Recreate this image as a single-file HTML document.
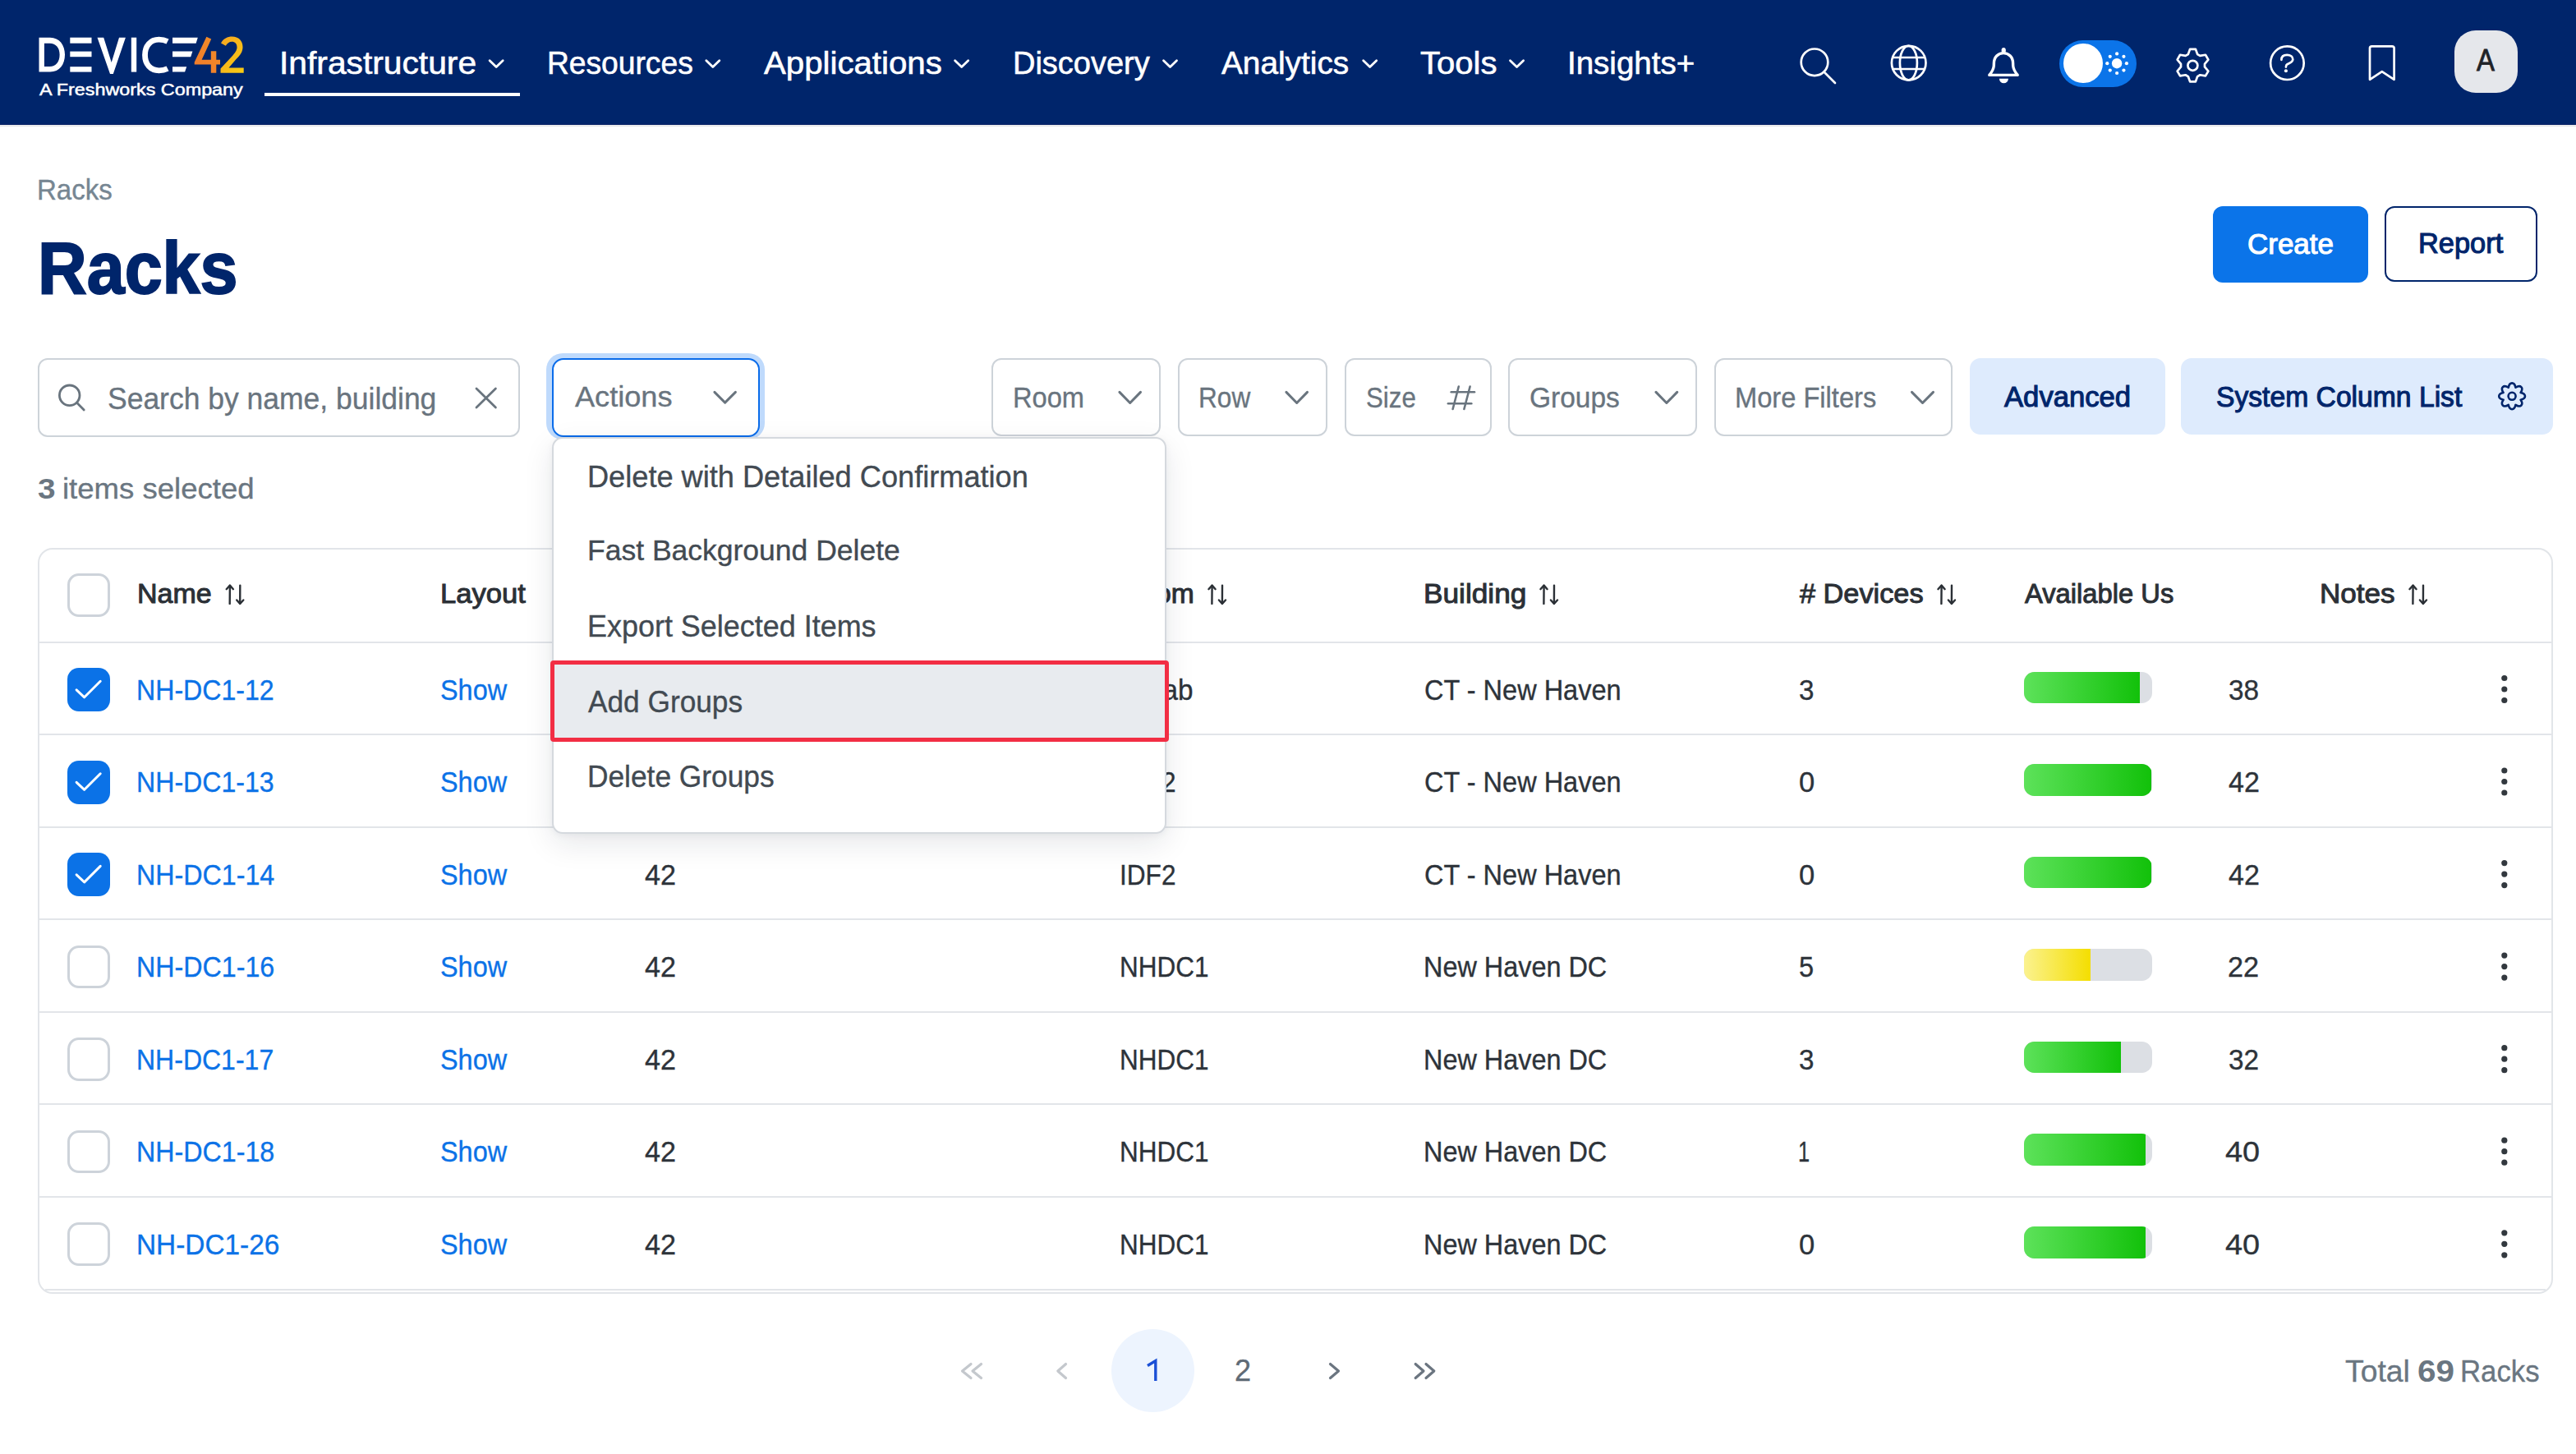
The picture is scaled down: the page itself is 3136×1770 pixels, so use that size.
<!DOCTYPE html><html><head><meta charset="utf-8"><title>Racks</title><style>
html,body{margin:0;padding:0;width:3136px;height:1770px;overflow:hidden;background:#fff;font-family:"Liberation Sans",sans-serif}
.t{position:absolute;white-space:nowrap;transform-origin:0 0}
.b{position:absolute;box-sizing:border-box}
svg{position:absolute;overflow:visible}
</style></head><body>
<div class="b" style="left:0;top:0;width:3136px;height:152px;background:#00256B"></div>
<div class="b" style="left:0;top:151px;width:3136px;height:1px;background:#001B62"></div>
<div class="b" style="left:0;top:152px;width:3136px;height:1px;background:#ECEDEF"></div>
<div class="b" style="left:0;top:153px;width:3136px;height:1px;background:#E0E3E6"></div>
<svg style="left:0;top:0" width="320" height="140" viewBox="0 0 320 140">
<defs><linearGradient id="g4" x1="0" y1="1" x2="1" y2="0"><stop offset="0" stop-color="#EE7A2C"/><stop offset="1" stop-color="#F28E27"/></linearGradient>
<linearGradient id="g2" x1="0" y1="0" x2="1" y2="1"><stop offset="0" stop-color="#F6A623"/><stop offset="1" stop-color="#F9CC12"/></linearGradient></defs>
<path fill="#fff" fill-rule="evenodd" d="M47.5 45.7H61C72.5 45.7 79 55 79 66.6C79 78.5 72.5 87.6 61 87.6H47.5Z M53.9 52.7V81H60.5C68 81 72.6 75.5 72.6 66.6C72.6 58 68 52.7 60.5 52.7Z"/>
<rect fill="#fff" x="85.3" y="45.7" width="26.2" height="7"/><rect fill="#fff" x="85.3" y="62.6" width="26.2" height="6.6"/><rect fill="#fff" x="85.3" y="81.2" width="26.2" height="6.4"/>
<path fill="#fff" d="M118.5 45.7H126.2L135.7 76L145 45.7H152.9L137.8 90H134Z"/>
<rect fill="#fff" x="159.8" y="45.7" width="6.4" height="41.9"/>
<path fill="none" stroke="#fff" stroke-width="6.8" d="M204 50.5C201 49 198 48.2 193.5 48.2C183 48.2 176.5 56 176.5 67C176.5 78 183 85.8 193.5 85.8C198 85.8 201 85 204 83.5"/>
<path fill="#fff" d="M210 45.7H240.8L238.6 52.7H210Z M210 62.6H234.4L232.2 69.2H210Z M210 81.2H227.2L225.1 87.6H210Z"/>
<path fill="url(#g4)" d="M251.4 44.8L257.2 47.6L245.6 72.8H256.8V62.2H263.3V72.8H268V78.5H263.3V88.8H256.8V78.5H236.7V75.8Z"/>
<path fill="url(#g2)" d="M269 52.5C272 47 277 44.6 282.5 44.6C290.5 44.6 295.5 50 295.5 57.2C295.5 63 292.5 67 287.5 72L278.5 82.5H296.7V88.8H268.5V83.5L282 69C286 64.5 288.5 61.5 288.5 57.5C288.5 53.2 286 50.8 282.3 50.8C279 50.8 276.5 52.8 274.8 55.8Z"/>
</svg>
<div class="b" style="left:322px;top:113px;width:311px;height:4px;background:#fff"></div>
<svg style="left:0;top:0" width="1" height="1"><polyline points="596.0999999999999,73.8 604.15,81.5 612.2,73.8" fill="none" stroke="#fff" stroke-width="2.8" stroke-linecap="round" stroke-linejoin="round"/></svg>
<svg style="left:0;top:0" width="1" height="1"><polyline points="859.8,73.8 867.8,81.5 875.8000000000001,73.8" fill="none" stroke="#fff" stroke-width="2.8" stroke-linecap="round" stroke-linejoin="round"/></svg>
<svg style="left:0;top:0" width="1" height="1"><polyline points="1162.6,73.8 1170.65,81.5 1178.7,73.8" fill="none" stroke="#fff" stroke-width="2.8" stroke-linecap="round" stroke-linejoin="round"/></svg>
<svg style="left:0;top:0" width="1" height="1"><polyline points="1416.5,73.8 1424.5,81.5 1432.5,73.8" fill="none" stroke="#fff" stroke-width="2.8" stroke-linecap="round" stroke-linejoin="round"/></svg>
<svg style="left:0;top:0" width="1" height="1"><polyline points="1659.7,73.8 1667.7,81.5 1675.7,73.8" fill="none" stroke="#fff" stroke-width="2.8" stroke-linecap="round" stroke-linejoin="round"/></svg>
<svg style="left:0;top:0" width="1" height="1"><polyline points="1838.5,73.8 1846.5500000000002,81.5 1854.6000000000001,73.8" fill="none" stroke="#fff" stroke-width="2.8" stroke-linecap="round" stroke-linejoin="round"/></svg>
<svg style="left:0;top:0" width="1" height="1">
<circle cx="2209" cy="75.8" r="16.3" fill="none" stroke="#fff" stroke-width="2.7"/>
<line x1="2221" y1="88" x2="2234" y2="101" stroke="#fff" stroke-width="2.7" stroke-linecap="round"/>
<circle cx="2323.7" cy="76.6" r="20.8" fill="none" stroke="#fff" stroke-width="2.7"/>
<ellipse cx="2323.4" cy="76.6" rx="10.5" ry="20.8" fill="none" stroke="#fff" stroke-width="2.7"/>
<line x1="2304" y1="70" x2="2343.5" y2="70" stroke="#fff" stroke-width="2.7"/>
<line x1="2304" y1="84" x2="2343.5" y2="84" stroke="#fff" stroke-width="2.7"/>
<path d="M2439 64.6C2445.5 64.6 2450.6 69.5 2450.6 77L2450.7 80C2451 84.5 2453 87.5 2456.2 91.4H2421.8C2425 87.5 2427 84.5 2427.3 80L2427.4 77C2427.4 69.5 2432.5 64.6 2439 64.6Z" fill="none" stroke="#fff" stroke-width="3.4" stroke-linejoin="round"/>
<circle cx="2439.2" cy="60.6" r="2.5" fill="#fff"/><rect x="2436.7" y="60.6" width="5" height="3" fill="#fff"/>
<path d="M2433.9 95.8H2444.9A5.5 5.5 0 0 1 2433.9 95.8Z" fill="#fff"/>
</svg>
<div class="b" style="left:2507px;top:48.6px;width:93.6px;height:57.7px;border-radius:29px;background:#0B74E9"></div>
<div class="b" style="left:2512.1px;top:52.7px;width:47.8px;height:48.3px;border-radius:50%;background:#fff"></div>
<svg style="left:0;top:0" width="1" height="1"><circle cx="2577.1" cy="77.2" r="6.2" fill="#fff"/><circle cx="2588.90" cy="77.20" r="2.1" fill="#fff"/><circle cx="2585.44" cy="85.54" r="2.1" fill="#fff"/><circle cx="2577.10" cy="89.00" r="2.1" fill="#fff"/><circle cx="2568.76" cy="85.54" r="2.1" fill="#fff"/><circle cx="2565.30" cy="77.20" r="2.1" fill="#fff"/><circle cx="2568.76" cy="68.86" r="2.1" fill="#fff"/><circle cx="2577.10" cy="65.40" r="2.1" fill="#fff"/><circle cx="2585.44" cy="68.86" r="2.1" fill="#fff"/></svg>
<svg style="left:0;top:0" width="1" height="1"><path d="M2663.81 66.15 L2666.10 59.79 L2672.90 59.79 L2675.19 66.15 L2678.30 67.95 L2684.96 66.75 L2688.36 72.64 L2683.99 77.80 L2683.99 81.40 L2688.36 86.56 L2684.96 92.45 L2678.30 91.25 L2675.19 93.05 L2672.90 99.41 L2666.10 99.41 L2663.81 93.05 L2660.70 91.25 L2654.04 92.45 L2650.64 86.56 L2655.01 81.40 L2655.01 77.80 L2650.64 72.64 L2654.04 66.75 L2660.70 67.95Z" fill="none" stroke="#fff" stroke-width="2.7" stroke-linejoin="round"/><circle cx="2669.4" cy="79.8" r="6" fill="none" stroke="#fff" stroke-width="2.7"/></svg>
<svg style="left:0;top:0" width="1" height="1">
<circle cx="2784.4" cy="76.7" r="20.3" fill="none" stroke="#fff" stroke-width="2.7"/>
<path d="M2777.4 72.8C2777.4 68.8 2780.3 66.9 2784.2 66.9C2788.4 66.9 2791.3 69 2791.3 72.2C2791.3 75.6 2787.6 76.6 2784.4 78.2C2783.3 78.8 2782.9 79.7 2782.9 81.6" fill="none" stroke="#fff" stroke-width="2.7" stroke-linecap="round"/>
<circle cx="2782.9" cy="86.3" r="2.05" fill="#fff"/>
<path d="M2885 96.8V58.5C2885 57 2886 56.3 2887.5 56.3H2912C2913.5 56.3 2914.6 57 2914.6 58.5V96.8L2899.8 87.2Z" fill="none" stroke="#fff" stroke-width="2.7" stroke-linejoin="round"/>
</svg>
<div class="b" style="left:2987.8px;top:36.6px;width:77px;height:76.5px;border-radius:26px;background:#E5E7EB"></div>
<div class="b" style="left:2694px;top:251px;width:189px;height:93px;border-radius:12px;background:#0B74E9"></div>
<div class="b" style="left:2902.5px;top:251.2px;width:186.3px;height:92.3px;border-radius:12px;border:2.5px solid #00256B;background:#fff"></div>
<div class="b" style="left:46.4px;top:436.4px;width:586.5px;height:95.6px;border-radius:12px;border:2px solid #CDD3D9"></div>
<svg style="left:0;top:0" width="1" height="1">
<circle cx="84.7" cy="481.3" r="12.3" fill="none" stroke="#69747E" stroke-width="2.8"/>
<line x1="93.8" y1="490.5" x2="102.2" y2="499" stroke="#69747E" stroke-width="2.8" stroke-linecap="round"/>
<line x1="580" y1="473" x2="603.4" y2="496" stroke="#69747E" stroke-width="2.8" stroke-linecap="round"/>
<line x1="603.4" y1="473" x2="580" y2="496" stroke="#69747E" stroke-width="2.8" stroke-linecap="round"/>
</svg>
<div class="b" style="left:665.4px;top:429.9px;width:265.3px;height:105px;border-radius:20px;background:#BFDAFC"></div>
<div class="b" style="left:671.9px;top:436px;width:252.9px;height:96px;border-radius:14px;border:2px solid #0A6CEA;background:#fff"></div>
<svg style="left:0;top:0" width="1" height="1"><polyline points="869.9,477.4 882.65,490.1 895.4,477.4" fill="none" stroke="#69747E" stroke-width="3" stroke-linecap="round" stroke-linejoin="round"/></svg>
<div class="b" style="left:1207.4px;top:436.4px;width:205.7px;height:94.5px;border-radius:12px;border:2px solid #CDD3D9"></div>
<div class="b" style="left:1433.5px;top:436.4px;width:182.5px;height:94.5px;border-radius:12px;border:2px solid #CDD3D9"></div>
<div class="b" style="left:1636.5px;top:436.4px;width:179.5px;height:94.5px;border-radius:12px;border:2px solid #CDD3D9"></div>
<div class="b" style="left:1836.3px;top:436.4px;width:230.1px;height:94.5px;border-radius:12px;border:2px solid #CDD3D9"></div>
<div class="b" style="left:2086.7px;top:436.4px;width:290.7px;height:94.5px;border-radius:12px;border:2px solid #CDD3D9"></div>
<svg style="left:0;top:0" width="1" height="1"><polyline points="1362.9,477.4 1375.7,490.5 1388.5,477.4" fill="none" stroke="#69747E" stroke-width="3" stroke-linecap="round" stroke-linejoin="round"/></svg>
<svg style="left:0;top:0" width="1" height="1"><polyline points="1565.9,477.4 1578.7,490.5 1591.5,477.4" fill="none" stroke="#69747E" stroke-width="3" stroke-linecap="round" stroke-linejoin="round"/></svg>
<svg style="left:0;top:0" width="1" height="1"><polyline points="2016.0,477.4 2028.85,490.5 2041.7,477.4" fill="none" stroke="#69747E" stroke-width="3" stroke-linecap="round" stroke-linejoin="round"/></svg>
<svg style="left:0;top:0" width="1" height="1"><polyline points="2327.5,477.4 2340.5,490.5 2353.5,477.4" fill="none" stroke="#69747E" stroke-width="3" stroke-linecap="round" stroke-linejoin="round"/></svg>
<svg style="left:0;top:0" width="1" height="1" stroke="#69747E" stroke-width="2.6" stroke-linecap="round">
<line x1="1775.8" y1="470.5" x2="1768.6" y2="498"/><line x1="1789.6" y1="470.5" x2="1782.4" y2="498"/><line x1="1766.7" y1="477.3" x2="1795" y2="477.3"/><line x1="1762.9" y1="491.2" x2="1791.3" y2="491.2"/></svg>
<div class="b" style="left:2398.2px;top:436.1px;width:237.8px;height:93.4px;border-radius:13px;background:#DEEBFD"></div>
<div class="b" style="left:2655.3px;top:436px;width:452.7px;height:92.6px;border-radius:13px;background:#DEEBFD"></div>
<svg style="left:0;top:0" width="1" height="1"><path d="M3053.74 471.77 C3055.16 464.64 3061.04 464.64 3062.46 471.77 C3068.51 467.74 3072.66 471.89 3068.63 477.94 C3075.76 479.36 3075.76 485.24 3068.63 486.66 C3072.66 492.71 3068.51 496.86 3062.46 492.83 C3061.04 499.96 3055.16 499.96 3053.74 492.83 C3047.69 496.86 3043.54 492.71 3047.57 486.66 C3040.44 485.24 3040.44 479.36 3047.57 477.94 C3043.54 471.89 3047.69 467.74 3053.74 471.77Z" fill="none" stroke="#00256B" stroke-width="2.6" stroke-linejoin="round"/><circle cx="3058.1" cy="482.3" r="4.5" fill="none" stroke="#00256B" stroke-width="2.6"/></svg>
<div class="b" style="left:46px;top:667px;width:3062px;height:908px;border-radius:18px;border:2px solid #E2E5E9"></div>
<div class="b" style="left:47px;top:780.5px;width:3060px;height:2px;background:#E2E5E9"></div>
<div class="b" style="left:47px;top:893.0px;width:3060px;height:2px;background:#E2E5E9"></div>
<div class="b" style="left:47px;top:1005.6px;width:3060px;height:2px;background:#E2E5E9"></div>
<div class="b" style="left:47px;top:1118.2px;width:3060px;height:2px;background:#E2E5E9"></div>
<div class="b" style="left:47px;top:1230.7px;width:3060px;height:2px;background:#E2E5E9"></div>
<div class="b" style="left:47px;top:1343.2px;width:3060px;height:2px;background:#E2E5E9"></div>
<div class="b" style="left:47px;top:1455.8px;width:3060px;height:2px;background:#E2E5E9"></div>
<div class="b" style="left:55px;top:1568.8px;width:3044px;height:2px;background:#E2E5E9"></div>
<div class="b" style="left:81.5px;top:698.4px;width:52.5px;height:52.5px;border-radius:14px;border:3.5px solid #CDD3DA;background:#fff"></div>
<div class="b" style="left:81.5px;top:813.0px;width:52.5px;height:53px;border-radius:14px;background:#0B72E7"></div><svg style="left:0;top:0" width="1" height="1"><polyline points="93.1,839.8 102.7,848.8 122.2,829.3" fill="none" stroke="#fff" stroke-width="3" stroke-linecap="round" stroke-linejoin="round"/></svg>
<div class="b" style="left:2463.7px;top:817.5px;width:156px;height:38.8px;border-radius:12.5px;background:#DCDFE4;overflow:hidden"><div style="width:140.9px;height:100%;background:linear-gradient(90deg,#5DE25A,#12C10A)"></div></div>
<svg style="left:0;top:0" width="1" height="1" fill="#32383E"><circle cx="3048.8" cy="825.5" r="3.6"/><circle cx="3048.8" cy="839.0" r="3.6"/><circle cx="3048.8" cy="852.5" r="3.6"/></svg>
<div class="b" style="left:81.5px;top:925.5px;width:52.5px;height:53px;border-radius:14px;background:#0B72E7"></div><svg style="left:0;top:0" width="1" height="1"><polyline points="93.1,952.3 102.7,961.3 122.2,941.8" fill="none" stroke="#fff" stroke-width="3" stroke-linecap="round" stroke-linejoin="round"/></svg>
<div class="b" style="left:2463.7px;top:930.0px;width:156px;height:38.8px;border-radius:12.5px;background:#DCDFE4;overflow:hidden"><div style="width:155.7px;height:100%;background:linear-gradient(90deg,#5DE25A,#12C10A)"></div></div>
<svg style="left:0;top:0" width="1" height="1" fill="#32383E"><circle cx="3048.8" cy="938.0" r="3.6"/><circle cx="3048.8" cy="951.5" r="3.6"/><circle cx="3048.8" cy="965.0" r="3.6"/></svg>
<div class="b" style="left:81.5px;top:1038.1px;width:52.5px;height:53px;border-radius:14px;background:#0B72E7"></div><svg style="left:0;top:0" width="1" height="1"><polyline points="93.1,1064.9 102.7,1073.9 122.2,1054.4" fill="none" stroke="#fff" stroke-width="3" stroke-linecap="round" stroke-linejoin="round"/></svg>
<div class="b" style="left:2463.7px;top:1042.6px;width:156px;height:38.8px;border-radius:12.5px;background:#DCDFE4;overflow:hidden"><div style="width:155.7px;height:100%;background:linear-gradient(90deg,#5DE25A,#12C10A)"></div></div>
<svg style="left:0;top:0" width="1" height="1" fill="#32383E"><circle cx="3048.8" cy="1050.6" r="3.6"/><circle cx="3048.8" cy="1064.1" r="3.6"/><circle cx="3048.8" cy="1077.6" r="3.6"/></svg>
<div class="b" style="left:81.5px;top:1150.6px;width:52.5px;height:52.5px;border-radius:14px;border:3.5px solid #CDD3DA;background:#fff"></div>
<div class="b" style="left:2463.7px;top:1155.1px;width:156px;height:38.8px;border-radius:12.5px;background:#DCDFE4;overflow:hidden"><div style="width:81.6px;height:100%;background:linear-gradient(90deg,#FBF28F,#F4DE00)"></div></div>
<svg style="left:0;top:0" width="1" height="1" fill="#32383E"><circle cx="3048.8" cy="1163.1" r="3.6"/><circle cx="3048.8" cy="1176.6" r="3.6"/><circle cx="3048.8" cy="1190.1" r="3.6"/></svg>
<div class="b" style="left:81.5px;top:1263.2px;width:52.5px;height:52.5px;border-radius:14px;border:3.5px solid #CDD3DA;background:#fff"></div>
<div class="b" style="left:2463.7px;top:1267.7px;width:156px;height:38.8px;border-radius:12.5px;background:#DCDFE4;overflow:hidden"><div style="width:118.6px;height:100%;background:linear-gradient(90deg,#5DE25A,#12C10A)"></div></div>
<svg style="left:0;top:0" width="1" height="1" fill="#32383E"><circle cx="3048.8" cy="1275.7" r="3.6"/><circle cx="3048.8" cy="1289.2" r="3.6"/><circle cx="3048.8" cy="1302.7" r="3.6"/></svg>
<div class="b" style="left:81.5px;top:1375.7px;width:52.5px;height:52.5px;border-radius:14px;border:3.5px solid #CDD3DA;background:#fff"></div>
<div class="b" style="left:2463.7px;top:1380.2px;width:156px;height:38.8px;border-radius:12.5px;background:#DCDFE4;overflow:hidden"><div style="width:148.3px;height:100%;background:linear-gradient(90deg,#5DE25A,#12C10A)"></div></div>
<svg style="left:0;top:0" width="1" height="1" fill="#32383E"><circle cx="3048.8" cy="1388.2" r="3.6"/><circle cx="3048.8" cy="1401.7" r="3.6"/><circle cx="3048.8" cy="1415.2" r="3.6"/></svg>
<div class="b" style="left:81.5px;top:1488.3px;width:52.5px;height:52.5px;border-radius:14px;border:3.5px solid #CDD3DA;background:#fff"></div>
<div class="b" style="left:2463.7px;top:1492.8px;width:156px;height:38.8px;border-radius:12.5px;background:#DCDFE4;overflow:hidden"><div style="width:148.3px;height:100%;background:linear-gradient(90deg,#5DE25A,#12C10A)"></div></div>
<svg style="left:0;top:0" width="1" height="1" fill="#32383E"><circle cx="3048.8" cy="1500.8" r="3.6"/><circle cx="3048.8" cy="1514.3" r="3.6"/><circle cx="3048.8" cy="1527.8" r="3.6"/></svg>
<svg style="left:0;top:0" width="1" height="1" fill="none" stroke="#2B3036" stroke-width="2.4" stroke-linecap="round" stroke-linejoin="round"><polyline points="275.7,717.2 279.90000000000003,712.6 283.90000000000003,717.2"/><line x1="279.90000000000003" y1="713" x2="279.7" y2="734.9"/><polyline points="288.2,730.5 292.2,734.9 296.3,730.5"/><line x1="292.3" y1="712.6" x2="292.2" y2="734.5"/></svg>
<svg style="left:0;top:0" width="1" height="1" fill="none" stroke="#2B3036" stroke-width="2.4" stroke-linecap="round" stroke-linejoin="round"><polyline points="1471.4,717.2 1475.6,712.6 1479.6,717.2"/><line x1="1475.6" y1="713" x2="1475.4" y2="734.9"/><polyline points="1483.9,730.5 1487.9,734.9 1492,730.5"/><line x1="1488" y1="712.6" x2="1487.9" y2="734.5"/></svg>
<svg style="left:0;top:0" width="1" height="1" fill="none" stroke="#2B3036" stroke-width="2.4" stroke-linecap="round" stroke-linejoin="round"><polyline points="1875.4,717.2 1879.6,712.6 1883.6,717.2"/><line x1="1879.6" y1="713" x2="1879.4" y2="734.9"/><polyline points="1887.9,730.5 1891.9,734.9 1896,730.5"/><line x1="1892" y1="712.6" x2="1891.9" y2="734.5"/></svg>
<svg style="left:0;top:0" width="1" height="1" fill="none" stroke="#2B3036" stroke-width="2.4" stroke-linecap="round" stroke-linejoin="round"><polyline points="2359.4,717.2 2363.6,712.6 2367.6,717.2"/><line x1="2363.6" y1="713" x2="2363.4" y2="734.9"/><polyline points="2371.9,730.5 2375.9,734.9 2380,730.5"/><line x1="2376" y1="712.6" x2="2375.9" y2="734.5"/></svg>
<svg style="left:0;top:0" width="1" height="1" fill="none" stroke="#2B3036" stroke-width="2.4" stroke-linecap="round" stroke-linejoin="round"><polyline points="2933.4,717.2 2937.6,712.6 2941.6,717.2"/><line x1="2937.6" y1="713" x2="2937.4" y2="734.9"/><polyline points="2945.9,730.5 2949.9,734.9 2954,730.5"/><line x1="2950" y1="712.6" x2="2949.9" y2="734.5"/></svg>
<div class="b" style="left:1352.9px;top:1617.7px;width:101.2px;height:101px;border-radius:50%;background:#EDF4FE"></div>
<div class="t" style="left:340.16px;top:56.50px;font-size:38.99px;line-height:38.99px;font-weight:400;color:#FFFFFF;transform:scaleX(1.0453);-webkit-text-stroke:0.6px #fff;">Infrastructure</div>
<div class="t" style="left:665.74px;top:56.50px;font-size:38.99px;line-height:38.99px;font-weight:400;color:#FFFFFF;transform:scaleX(0.9538);-webkit-text-stroke:0.6px #fff;">Resources</div>
<div class="t" style="left:929.50px;top:56.50px;font-size:38.99px;line-height:38.99px;font-weight:400;color:#FFFFFF;transform:scaleX(1.0311);-webkit-text-stroke:0.6px #fff;">Applications</div>
<div class="t" style="left:1232.88px;top:56.50px;font-size:38.99px;line-height:38.99px;font-weight:400;color:#FFFFFF;transform:scaleX(0.9738);-webkit-text-stroke:0.6px #fff;">Discovery</div>
<div class="t" style="left:1487.40px;top:56.50px;font-size:38.99px;line-height:38.99px;font-weight:400;color:#FFFFFF;transform:scaleX(0.9948);-webkit-text-stroke:0.6px #fff;">Analytics</div>
<div class="t" style="left:1728.57px;top:56.50px;font-size:38.99px;line-height:38.99px;font-weight:400;color:#FFFFFF;transform:scaleX(1.0270);-webkit-text-stroke:0.6px #fff;">Tools</div>
<div class="t" style="left:1908.34px;top:56.50px;font-size:38.99px;line-height:38.99px;font-weight:400;color:#FFFFFF;transform:scaleX(0.9876);-webkit-text-stroke:0.6px #fff;">Insights+</div>
<div class="t" style="left:48.00px;top:99.20px;font-size:20.43px;line-height:20.43px;font-weight:400;color:#FFFFFF;transform:scaleX(1.1429);-webkit-text-stroke:0.5px #fff;">A Freshworks Company</div>
<div class="t" style="left:3015.00px;top:55.30px;font-size:37.39px;line-height:37.39px;font-weight:400;color:#1F2328;transform:scaleX(0.8800);-webkit-text-stroke:0.8px #1F2328;">A</div>
<div class="t" style="left:44.57px;top:213.40px;font-size:35.07px;line-height:35.07px;font-weight:400;color:#768692;transform:scaleX(0.9419);-webkit-text-stroke:0.4px #768692;">Racks</div>
<div class="t" style="left:46.40px;top:282.00px;font-size:89.86px;line-height:89.86px;font-weight:700;color:#00256B;transform:scaleX(0.9198);-webkit-text-stroke:2px #00256B;">Racks</div>
<div class="t" style="left:2735.99px;top:280.30px;font-size:34.64px;line-height:34.64px;font-weight:400;color:#FFFFFF;transform:scaleX(1.0098);-webkit-text-stroke:1.1px #fff;">Create</div>
<div class="t" style="left:2943.91px;top:279.30px;font-size:34.64px;line-height:34.64px;font-weight:400;color:#00256B;transform:scaleX(0.9931);-webkit-text-stroke:1.1px #00256B;">Report</div>
<div class="t" style="left:131.08px;top:467.70px;font-size:36.88px;line-height:36.88px;font-weight:400;color:#69747E;transform:scaleX(0.9621);-webkit-text-stroke:0.35px #69747E;">Search by name, building</div>
<div class="t" style="left:700.00px;top:465.20px;font-size:35.29px;line-height:35.29px;font-weight:400;color:#69747E;transform:scaleX(1.0246);-webkit-text-stroke:0.35px #69747E;">Actions</div>
<div class="t" style="left:1232.66px;top:466.70px;font-size:34.42px;line-height:34.42px;font-weight:400;color:#69747E;transform:scaleX(0.9483);-webkit-text-stroke:0.35px #69747E;">Room</div>
<div class="t" style="left:1458.85px;top:466.70px;font-size:34.42px;line-height:34.42px;font-weight:400;color:#69747E;transform:scaleX(0.9182);-webkit-text-stroke:0.35px #69747E;">Row</div>
<div class="t" style="left:1662.68px;top:466.70px;font-size:34.42px;line-height:34.42px;font-weight:400;color:#69747E;transform:scaleX(0.9079);-webkit-text-stroke:0.35px #69747E;">Size</div>
<div class="t" style="left:1862.35px;top:466.70px;font-size:34.42px;line-height:34.42px;font-weight:400;color:#69747E;transform:scaleX(0.9736);-webkit-text-stroke:0.35px #69747E;">Groups</div>
<div class="t" style="left:2111.86px;top:466.70px;font-size:34.42px;line-height:34.42px;font-weight:400;color:#69747E;transform:scaleX(0.9483);-webkit-text-stroke:0.35px #69747E;">More Filters</div>
<div class="t" style="left:2440.20px;top:465.50px;font-size:34.93px;line-height:34.93px;font-weight:400;color:#00256B;transform:scaleX(0.9922);-webkit-text-stroke:1.1px #00256B;">Advanced</div>
<div class="t" style="left:2697.54px;top:465.50px;font-size:34.93px;line-height:34.93px;font-weight:400;color:#00256B;transform:scaleX(0.9639);-webkit-text-stroke:1.1px #00256B;">System Column List</div>
<div class="t" style="left:46.12px;top:577.20px;font-size:35.94px;line-height:35.94px;font-weight:700;color:#6A7681;transform:scaleX(1.0778);">3</div>
<div class="t" style="left:75.94px;top:578.20px;font-size:35.43px;line-height:35.43px;font-weight:400;color:#6A7681;transform:scaleX(1.0315);-webkit-text-stroke:0.35px #6A7681;">items selected</div>
<div class="t" style="left:166.80px;top:705.40px;font-size:34.06px;line-height:34.06px;font-weight:400;color:#2B3036;transform:scaleX(0.9977);-webkit-text-stroke:1px #2B3036;">Name</div>
<div class="t" style="left:536.37px;top:705.40px;font-size:34.06px;line-height:34.06px;font-weight:400;color:#2B3036;transform:scaleX(1.0160);-webkit-text-stroke:1px #2B3036;">Layout</div>
<div class="t" style="left:784.34px;top:705.40px;font-size:34.06px;line-height:34.06px;font-weight:400;color:#2B3036;transform:scaleX(1.1641);-webkit-text-stroke:1px #2B3036;">Size</div>
<div class="t" style="left:1364.02px;top:705.40px;font-size:34.06px;line-height:34.06px;font-weight:400;color:#2B3036;transform:scaleX(0.9885);-webkit-text-stroke:1px #2B3036;">Room</div>
<div class="t" style="left:1733.43px;top:705.40px;font-size:34.06px;line-height:34.06px;font-weight:400;color:#2B3036;transform:scaleX(1.0350);-webkit-text-stroke:1px #2B3036;">Building</div>
<div class="t" style="left:2190.90px;top:705.40px;font-size:34.06px;line-height:34.06px;font-weight:400;color:#2B3036;transform:scaleX(1.0074);-webkit-text-stroke:1px #2B3036;"># Devices</div>
<div class="t" style="left:2465.00px;top:705.40px;font-size:34.06px;line-height:34.06px;font-weight:400;color:#2B3036;transform:scaleX(0.9612);-webkit-text-stroke:1px #2B3036;">Available Us</div>
<div class="t" style="left:2823.64px;top:705.40px;font-size:34.06px;line-height:34.06px;font-weight:400;color:#2B3036;transform:scaleX(1.0302);-webkit-text-stroke:1px #2B3036;">Notes</div>
<div class="t" style="left:166.01px;top:822.57px;font-size:34.57px;line-height:34.57px;font-weight:400;color:#0B72E7;transform:scaleX(0.9290);-webkit-text-stroke:0.35px #0B72E7;">NH-DC1-12</div>
<div class="t" style="left:535.82px;top:822.57px;font-size:34.57px;line-height:34.57px;font-weight:400;color:#0B72E7;transform:scaleX(0.9376);-webkit-text-stroke:0.35px #0B72E7;">Show</div>
<div class="t" style="left:784.51px;top:822.57px;font-size:34.57px;line-height:34.57px;font-weight:400;color:#2D333A;transform:scaleX(0.9861);-webkit-text-stroke:0.35px #2D333A;">42</div>
<div class="t" style="left:1397.11px;top:822.57px;font-size:34.57px;line-height:34.57px;font-weight:400;color:#2D333A;transform:scaleX(0.9623);-webkit-text-stroke:0.35px #2D333A;">Lab</div>
<div class="t" style="left:1733.62px;top:822.57px;font-size:34.57px;line-height:34.57px;font-weight:400;color:#2D333A;transform:scaleX(0.9402);-webkit-text-stroke:0.35px #2D333A;">CT - New Haven</div>
<div class="t" style="left:2189.94px;top:822.57px;font-size:34.57px;line-height:34.57px;font-weight:400;color:#2D333A;transform:scaleX(0.9588);-webkit-text-stroke:0.35px #2D333A;">3</div>
<div class="t" style="left:2713.34px;top:822.57px;font-size:34.57px;line-height:34.57px;font-weight:400;color:#2D333A;transform:scaleX(0.9639);-webkit-text-stroke:0.35px #2D333A;">38</div>
<div class="t" style="left:166.01px;top:935.12px;font-size:34.57px;line-height:34.57px;font-weight:400;color:#0B72E7;transform:scaleX(0.9290);-webkit-text-stroke:0.35px #0B72E7;">NH-DC1-13</div>
<div class="t" style="left:535.82px;top:935.12px;font-size:34.57px;line-height:34.57px;font-weight:400;color:#0B72E7;transform:scaleX(0.9376);-webkit-text-stroke:0.35px #0B72E7;">Show</div>
<div class="t" style="left:784.51px;top:935.12px;font-size:34.57px;line-height:34.57px;font-weight:400;color:#2D333A;transform:scaleX(0.9861);-webkit-text-stroke:0.35px #2D333A;">42</div>
<div class="t" style="left:1363.26px;top:935.12px;font-size:34.57px;line-height:34.57px;font-weight:400;color:#2D333A;transform:scaleX(0.9143);-webkit-text-stroke:0.35px #2D333A;">IDF2</div>
<div class="t" style="left:1733.62px;top:935.12px;font-size:34.57px;line-height:34.57px;font-weight:400;color:#2D333A;transform:scaleX(0.9402);-webkit-text-stroke:0.35px #2D333A;">CT - New Haven</div>
<div class="t" style="left:2189.90px;top:935.12px;font-size:34.57px;line-height:34.57px;font-weight:400;color:#2D333A;transform:scaleX(1.0000);-webkit-text-stroke:0.35px #2D333A;">0</div>
<div class="t" style="left:2712.62px;top:935.12px;font-size:34.57px;line-height:34.57px;font-weight:400;color:#2D333A;transform:scaleX(0.9833);-webkit-text-stroke:0.35px #2D333A;">42</div>
<div class="t" style="left:166.00px;top:1047.67px;font-size:34.57px;line-height:34.57px;font-weight:400;color:#0B72E7;transform:scaleX(0.9322);-webkit-text-stroke:0.35px #0B72E7;">NH-DC1-14</div>
<div class="t" style="left:535.82px;top:1047.67px;font-size:34.57px;line-height:34.57px;font-weight:400;color:#0B72E7;transform:scaleX(0.9376);-webkit-text-stroke:0.35px #0B72E7;">Show</div>
<div class="t" style="left:784.51px;top:1047.67px;font-size:34.57px;line-height:34.57px;font-weight:400;color:#2D333A;transform:scaleX(0.9861);-webkit-text-stroke:0.35px #2D333A;">42</div>
<div class="t" style="left:1363.26px;top:1047.67px;font-size:34.57px;line-height:34.57px;font-weight:400;color:#2D333A;transform:scaleX(0.9143);-webkit-text-stroke:0.35px #2D333A;">IDF2</div>
<div class="t" style="left:1733.62px;top:1047.67px;font-size:34.57px;line-height:34.57px;font-weight:400;color:#2D333A;transform:scaleX(0.9402);-webkit-text-stroke:0.35px #2D333A;">CT - New Haven</div>
<div class="t" style="left:2189.90px;top:1047.67px;font-size:34.57px;line-height:34.57px;font-weight:400;color:#2D333A;transform:scaleX(1.0000);-webkit-text-stroke:0.35px #2D333A;">0</div>
<div class="t" style="left:2712.62px;top:1047.67px;font-size:34.57px;line-height:34.57px;font-weight:400;color:#2D333A;transform:scaleX(0.9833);-webkit-text-stroke:0.35px #2D333A;">42</div>
<div class="t" style="left:166.00px;top:1160.22px;font-size:34.57px;line-height:34.57px;font-weight:400;color:#0B72E7;transform:scaleX(0.9318);-webkit-text-stroke:0.35px #0B72E7;">NH-DC1-16</div>
<div class="t" style="left:535.82px;top:1160.22px;font-size:34.57px;line-height:34.57px;font-weight:400;color:#0B72E7;transform:scaleX(0.9376);-webkit-text-stroke:0.35px #0B72E7;">Show</div>
<div class="t" style="left:784.51px;top:1160.22px;font-size:34.57px;line-height:34.57px;font-weight:400;color:#2D333A;transform:scaleX(0.9861);-webkit-text-stroke:0.35px #2D333A;">42</div>
<div class="t" style="left:1363.27px;top:1160.22px;font-size:34.57px;line-height:34.57px;font-weight:400;color:#2D333A;transform:scaleX(0.9113);-webkit-text-stroke:0.35px #2D333A;">NHDC1</div>
<div class="t" style="left:1732.69px;top:1160.22px;font-size:34.57px;line-height:34.57px;font-weight:400;color:#2D333A;transform:scaleX(0.9373);-webkit-text-stroke:0.35px #2D333A;">New Haven DC</div>
<div class="t" style="left:2189.96px;top:1160.22px;font-size:34.57px;line-height:34.57px;font-weight:400;color:#2D333A;transform:scaleX(0.9412);-webkit-text-stroke:0.35px #2D333A;">5</div>
<div class="t" style="left:2712.32px;top:1160.22px;font-size:34.57px;line-height:34.57px;font-weight:400;color:#2D333A;transform:scaleX(0.9914);-webkit-text-stroke:0.35px #2D333A;">22</div>
<div class="t" style="left:166.02px;top:1272.77px;font-size:34.57px;line-height:34.57px;font-weight:400;color:#0B72E7;transform:scaleX(0.9261);-webkit-text-stroke:0.35px #0B72E7;">NH-DC1-17</div>
<div class="t" style="left:535.82px;top:1272.77px;font-size:34.57px;line-height:34.57px;font-weight:400;color:#0B72E7;transform:scaleX(0.9376);-webkit-text-stroke:0.35px #0B72E7;">Show</div>
<div class="t" style="left:784.51px;top:1272.77px;font-size:34.57px;line-height:34.57px;font-weight:400;color:#2D333A;transform:scaleX(0.9861);-webkit-text-stroke:0.35px #2D333A;">42</div>
<div class="t" style="left:1363.27px;top:1272.77px;font-size:34.57px;line-height:34.57px;font-weight:400;color:#2D333A;transform:scaleX(0.9113);-webkit-text-stroke:0.35px #2D333A;">NHDC1</div>
<div class="t" style="left:1732.69px;top:1272.77px;font-size:34.57px;line-height:34.57px;font-weight:400;color:#2D333A;transform:scaleX(0.9373);-webkit-text-stroke:0.35px #2D333A;">New Haven DC</div>
<div class="t" style="left:2189.94px;top:1272.77px;font-size:34.57px;line-height:34.57px;font-weight:400;color:#2D333A;transform:scaleX(0.9588);-webkit-text-stroke:0.35px #2D333A;">3</div>
<div class="t" style="left:2713.34px;top:1272.77px;font-size:34.57px;line-height:34.57px;font-weight:400;color:#2D333A;transform:scaleX(0.9639);-webkit-text-stroke:0.35px #2D333A;">32</div>
<div class="t" style="left:166.00px;top:1385.33px;font-size:34.57px;line-height:34.57px;font-weight:400;color:#0B72E7;transform:scaleX(0.9318);-webkit-text-stroke:0.35px #0B72E7;">NH-DC1-18</div>
<div class="t" style="left:535.82px;top:1385.33px;font-size:34.57px;line-height:34.57px;font-weight:400;color:#0B72E7;transform:scaleX(0.9376);-webkit-text-stroke:0.35px #0B72E7;">Show</div>
<div class="t" style="left:784.51px;top:1385.33px;font-size:34.57px;line-height:34.57px;font-weight:400;color:#2D333A;transform:scaleX(0.9861);-webkit-text-stroke:0.35px #2D333A;">42</div>
<div class="t" style="left:1363.27px;top:1385.33px;font-size:34.57px;line-height:34.57px;font-weight:400;color:#2D333A;transform:scaleX(0.9113);-webkit-text-stroke:0.35px #2D333A;">NHDC1</div>
<div class="t" style="left:1732.69px;top:1385.33px;font-size:34.57px;line-height:34.57px;font-weight:400;color:#2D333A;transform:scaleX(0.9373);-webkit-text-stroke:0.35px #2D333A;">New Haven DC</div>
<div class="t" style="left:2188.70px;top:1385.33px;font-size:34.57px;line-height:34.57px;font-weight:400;color:#2D333A;transform:scaleX(0.7333);-webkit-text-stroke:0.35px #2D333A;">1</div>
<div class="t" style="left:2708.51px;top:1385.33px;font-size:34.57px;line-height:34.57px;font-weight:400;color:#2D333A;transform:scaleX(1.0944);-webkit-text-stroke:0.35px #2D333A;">40</div>
<div class="t" style="left:165.90px;top:1497.87px;font-size:34.57px;line-height:34.57px;font-weight:400;color:#0B72E7;transform:scaleX(0.9659);-webkit-text-stroke:0.35px #0B72E7;">NH-DC1-26</div>
<div class="t" style="left:535.82px;top:1497.87px;font-size:34.57px;line-height:34.57px;font-weight:400;color:#0B72E7;transform:scaleX(0.9376);-webkit-text-stroke:0.35px #0B72E7;">Show</div>
<div class="t" style="left:784.51px;top:1497.87px;font-size:34.57px;line-height:34.57px;font-weight:400;color:#2D333A;transform:scaleX(0.9861);-webkit-text-stroke:0.35px #2D333A;">42</div>
<div class="t" style="left:1363.27px;top:1497.87px;font-size:34.57px;line-height:34.57px;font-weight:400;color:#2D333A;transform:scaleX(0.9113);-webkit-text-stroke:0.35px #2D333A;">NHDC1</div>
<div class="t" style="left:1732.69px;top:1497.87px;font-size:34.57px;line-height:34.57px;font-weight:400;color:#2D333A;transform:scaleX(0.9373);-webkit-text-stroke:0.35px #2D333A;">New Haven DC</div>
<div class="t" style="left:2189.90px;top:1497.87px;font-size:34.57px;line-height:34.57px;font-weight:400;color:#2D333A;transform:scaleX(1.0000);-webkit-text-stroke:0.35px #2D333A;">0</div>
<div class="t" style="left:2708.51px;top:1497.87px;font-size:34.57px;line-height:34.57px;font-weight:400;color:#2D333A;transform:scaleX(1.0944);-webkit-text-stroke:0.35px #2D333A;">40</div>
<div class="t" style="left:2855.39px;top:1650.50px;font-size:37.03px;line-height:37.03px;font-weight:400;color:#6A7681;transform:scaleX(1.0080);-webkit-text-stroke:0.35px #6A7681;">Total</div>
<div class="t" style="left:2942.52px;top:1650.50px;font-size:37.54px;line-height:37.54px;font-weight:700;color:#6A7681;transform:scaleX(1.0769);">69</div>
<div class="t" style="left:2995.18px;top:1650.50px;font-size:37.03px;line-height:37.03px;font-weight:400;color:#6A7681;transform:scaleX(0.9388);-webkit-text-stroke:0.35px #6A7681;">Racks</div>
<div class="t" style="left:1503.34px;top:1651.30px;font-size:36.74px;line-height:36.74px;font-weight:400;color:#5F6B76;transform:scaleX(0.9824);-webkit-text-stroke:0.35px #5F6B76;">2</div>
<div class="b" style="left:671.8px;top:532.4px;width:748.5px;height:483px;border-radius:13px;border:2px solid #D5D9DE;background:#fff;box-shadow:0 12px 36px rgba(20,30,50,0.10),0 2px 8px rgba(20,30,50,0.05)"></div>
<div class="b" style="left:669.5px;top:804.2px;width:753.1px;height:98.5px;border-radius:4px;border:5.5px solid #F22E44;background:#E8EBEF"></div>
<div class="t" style="left:714.66px;top:563.20px;font-size:36.88px;line-height:36.88px;font-weight:400;color:#424A52;transform:scaleX(0.9810);-webkit-text-stroke:0.35px #424A52;">Delete with Detailed Confirmation</div>
<div class="t" style="left:714.59px;top:653.20px;font-size:35.43px;line-height:35.43px;font-weight:400;color:#424A52;transform:scaleX(1.0019);-webkit-text-stroke:0.35px #424A52;">Fast Background Delete</div>
<div class="t" style="left:714.64px;top:745.20px;font-size:36.45px;line-height:36.45px;font-weight:400;color:#424A52;transform:scaleX(0.9864);-webkit-text-stroke:0.35px #424A52;">Export Selected Items</div>
<div class="t" style="left:716.20px;top:836.60px;font-size:36.30px;line-height:36.30px;font-weight:400;color:#424A52;transform:scaleX(0.9708);-webkit-text-stroke:0.35px #424A52;">Add Groups</div>
<div class="t" style="left:714.68px;top:928.20px;font-size:36.30px;line-height:36.30px;font-weight:400;color:#424A52;transform:scaleX(0.9722);-webkit-text-stroke:0.35px #424A52;">Delete Groups</div>
<svg style="left:0;top:0" width="1" height="1" fill="none" stroke-width="3.2" stroke-linecap="round" stroke-linejoin="round">
<polyline stroke="#C4C8CD" points="1182,1660.5 1171.5,1669 1182,1677.5"/><polyline stroke="#C4C8CD" points="1194.5,1660.5 1184,1669 1194.5,1677.5"/>
<polyline stroke="#C4C8CD" points="1297.5,1660.5 1287.8,1669 1297.5,1677.5"/>
<polyline stroke="#6B7580" points="1619.5,1660.5 1629.5,1669 1619.5,1677.5"/>
<polyline stroke="#6B7580" points="1723.2,1660.5 1733,1669 1723.2,1677.5"/><polyline stroke="#6B7580" points="1736,1660.5 1745.8,1669 1736,1677.5"/>
<path stroke="#1A4FD6" stroke-width="3.4" stroke-linecap="butt" stroke-linejoin="miter" d="M1406.8 1681V1656.5L1397 1662.5"/>
</svg>
</body></html>
